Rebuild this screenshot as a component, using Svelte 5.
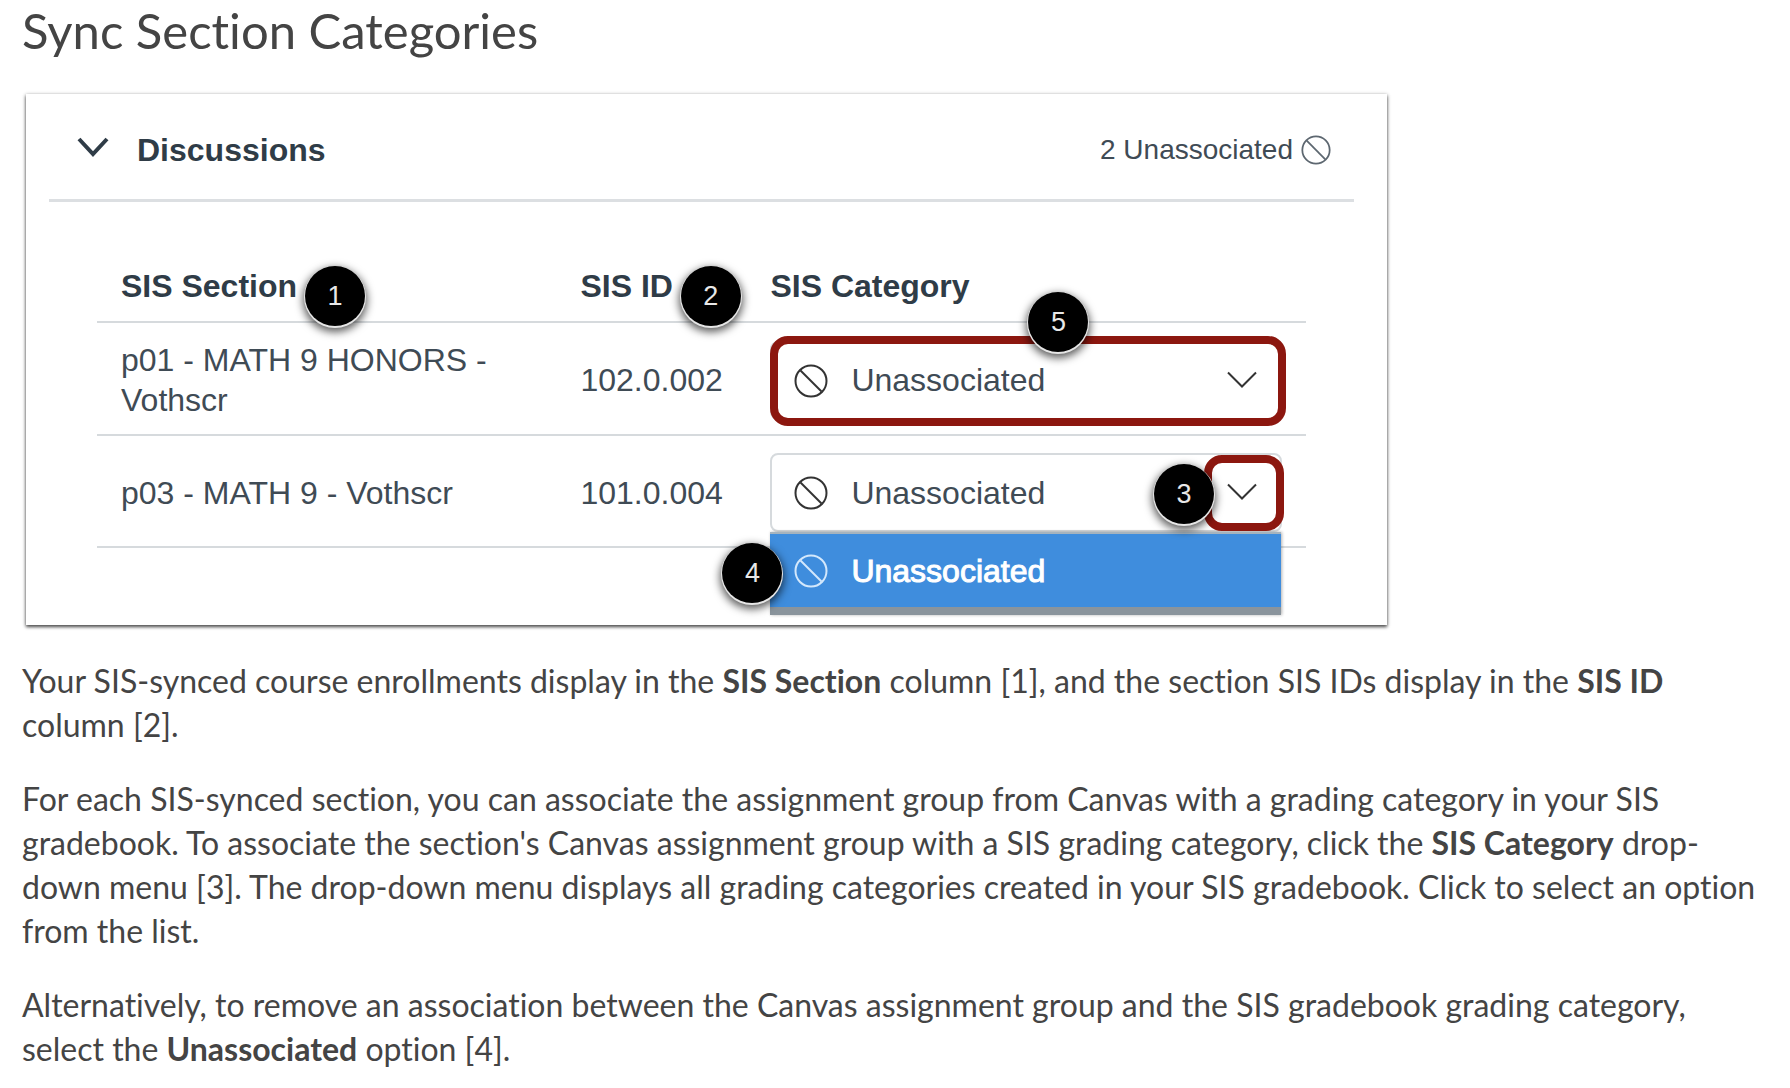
<script lang="ts">
	type Section = {
		id: string;
		name: string;
		sisId: string;
		category: string;
		open: boolean;
	};

	let sections = $state<Section[]>([
		{
			id: 'p01',
			name: 'p01 - MATH 9 HONORS - Vothscr',
			sisId: '102.0.002',
			category: 'Unassociated',
			open: false
		},
		{
			id: 'p03',
			name: 'p03 - MATH 9 - Vothscr',
			sisId: '101.0.004',
			category: 'Unassociated',
			open: true
		}
	]);

	const categories = ['Unassociated'];

	let expanded = $state(true);

	function pick(section: Section, category: string) {
		section.category = category;
		section.open = false;
	}
</script>

{#snippet noneIcon(className: string)}
	<svg class={className} viewBox="0 0 34 34" aria-hidden="true">
		<circle cx="17" cy="17" r="15.5" />
		<path d="M6.5 6.5 L27.5 27.5" />
	</svg>
{/snippet}

<main>
	<h1>Sync Section Categories</h1>

	<figure class="card">
		<div class="card-header">
			<button class="toggle" type="button" aria-expanded={expanded} onclick={() => (expanded = !expanded)}>
				<svg class="toggle-icon" viewBox="0 0 32 20" aria-hidden="true">
					<path d="M2 2 L16 17 L30 2" />
				</svg>
				<span>Discussions</span>
			</button>
			<span class="summary">
				2 Unassociated
				{@render noneIcon('none-icon small')}
			</span>
		</div>

		{#if expanded}
			<table>
				<colgroup>
					<col class="col-section" />
					<col class="col-id" />
					<col />
				</colgroup>
				<thead>
					<tr>
						<th scope="col"><span class="marked">SIS Section<span class="badge after">1</span></span></th>
						<th scope="col"><span class="marked">SIS ID<span class="badge after">2</span></span></th>
						<th scope="col">SIS Category</th>
					</tr>
				</thead>
				<tbody>
					{#each sections as section, i (section.id)}
						<tr>
							<td>{section.name}</td>
							<td>{section.sisId}</td>
							<td>
								<div class="picker">
									{@render noneIcon('none-icon lead')}
									<select bind:value={section.category} aria-label="SIS Category for {section.name}">
										{#each categories as category}
											<option>{category}</option>
										{/each}
									</select>
									<svg class="chevron" viewBox="0 0 30 18" aria-hidden="true">
										<path d="M1 1.5 L15 15.5 L29 1.5" />
									</svg>

									{#if section.open}
										<div class="menu">
											{#each categories as category}
												<button type="button" onclick={() => pick(section, category)}>
													{@render noneIcon('none-icon')}
													{category}
												</button>
											{/each}
										</div>
									{/if}

									{#if i === 0}
										<span class="outline whole"></span>
										<span class="badge five">5</span>
									{:else}
										<span class="outline arrow"></span>
										<span class="badge three">3</span>
										<span class="badge four">4</span>
									{/if}
								</div>
							</td>
						</tr>
					{/each}
				</tbody>
			</table>
		{/if}
	</figure>

	<p>
		Your SIS-synced course enrollments display in the <strong>SIS Section</strong> column [1], and the
		section SIS IDs display in the <strong>SIS ID</strong> column [2].
	</p>
	<p>
		For each SIS-synced section, you can associate the assignment group from Canvas with a grading
		category in your SIS gradebook. To associate the section's Canvas assignment group with a SIS
		grading category, click the <strong>SIS Category</strong> drop-down menu [3]. The drop-down menu
		displays all grading categories created in your SIS gradebook. Click to select an option from the
		list.
	</p>
	<p>
		Alternatively, to remove an association between the Canvas assignment group and the SIS gradebook
		grading category, select the <strong>Unassociated</strong> option [4].
	</p>
</main>

<style>
	:global(body) {
		background: #fff;
	}

	main {
		padding: 2px 20px 0 22px;
		font-family: Lato, sans-serif;
		font-size: 32px;
		font-variant-ligatures: none;
		line-height: 44px;
		color: #444;
	}

	h1 {
		margin: 0 0 36px;
		font-size: 49px;
		font-weight: 400;
		line-height: 56px;
	}

	p {
		margin: 0 0 30px;
	}

	.card {
		max-width: 1361px;
		box-sizing: border-box;
		margin: 0 0 34px 4px;
		padding: 0 33px 77px 23px;
		box-shadow:
			0 2px 3px rgba(0, 0, 0, 0.55),
			0 1px 4px rgba(0, 0, 0, 0.4);
		font-family: "Liberation Sans", Arial, sans-serif;
		font-size: 32px;
		line-height: 40px;
		color: #3f4b55;
	}

	.card-header {
		display: flex;
		align-items: center;
		justify-content: space-between;
		height: 105px;
		padding: 0 23px 0 28px;
		border-bottom: 3px solid #dcdfe2;
	}

	.toggle {
		display: flex;
		align-items: center;
		gap: 28px;
		padding: 6px 0 0;
		border: 0;
		background: none;
		font: inherit;
		font-weight: 700;
		color: #2f3c47;
		cursor: pointer;
	}

	.toggle-icon {
		width: 32px;
		height: 20px;
		margin-bottom: 6px;
		fill: none;
		stroke: #2f3c47;
		stroke-width: 4;
	}

	.summary {
		display: flex;
		align-items: center;
		gap: 8px;
		padding-top: 6px;
		font-size: 28px;
	}

	.none-icon {
		width: 34px;
		height: 34px;
		fill: none;
		stroke: #333;
		stroke-width: 2;
	}

	.none-icon.small {
		width: 30px;
		height: 30px;
		stroke: #5d6770;
	}

	table {
		width: calc(100% - 96px);
		margin: 64px 48px 0;
		table-layout: fixed;
		border-collapse: separate;
		border-spacing: 0;
	}

	.col-section {
		width: 38%;
	}

	.col-id {
		width: 190px;
	}

	th,
	td {
		border-bottom: 2px solid #d6dadd;
		text-align: left;
		vertical-align: middle;
	}

	th {
		padding: 0 24px 15px;
		font-weight: 700;
		white-space: nowrap;
		color: #2f3c47;
	}

	td {
		padding: 17px 24px 14px;
	}

	td:nth-child(2) {
		padding-right: 0;
	}

	.marked,
	.picker {
		position: relative;
	}

	select {
		display: block;
		width: 100%;
		height: 79px;
		padding: 0 79px;
		appearance: none;
		border: 2px solid #d6dadd;
		border-radius: 8px;
		background: #fff;
		font: inherit;
		color: inherit;
	}

	.lead,
	.chevron {
		position: absolute;
		pointer-events: none;
	}

	.lead {
		top: 23px;
		left: 24px;
	}

	.chevron {
		top: 30px;
		right: 25px;
		width: 30px;
		height: 18px;
		fill: none;
		stroke: #333;
		stroke-width: 2;
	}

	.menu {
		position: absolute;
		top: 100%;
		left: 0;
		right: 1px;
		border-top: 2px solid #a5b3be;
		border-bottom: 8px solid #8a949c;
		background: #3f8ddd;
		box-shadow: 1px 0 3px rgba(0, 0, 0, 0.3);
	}

	.menu button {
		display: flex;
		align-items: center;
		gap: 23px;
		width: 100%;
		height: 73px;
		padding: 0 24px;
		border: 0;
		background: none;
		font: inherit;
		color: #fff;
		-webkit-text-stroke: 1px #fff;
	}

	.menu .none-icon {
		stroke: #d3e8fc;
	}

	.outline {
		position: absolute;
		border: 8px solid #8c170f;
		border-radius: 18px;
		pointer-events: none;
	}

	.outline.whole {
		inset: -5px -4px -6px 0;
	}

	.outline.arrow {
		top: 2px;
		right: -2px;
		bottom: 1px;
		width: 64px;
	}

	.badge {
		position: absolute;
		display: grid;
		place-items: center;
		width: 60px;
		height: 60px;
		border-radius: 50%;
		background: #000;
		box-shadow:
			0 1px 0 1px #e6e6e6,
			0 4px 8px 2px rgba(0, 0, 0, 0.65);
		font-size: 27px;
		font-weight: 400;
		line-height: 32px;
		color: #e8e8e8;
	}

	.badge.after {
		top: -2px;
		left: calc(100% + 8px);
	}

	.badge.five {
		top: -49px;
		left: 258px;
	}

	.badge.three {
		top: 11px;
		right: 68px;
	}

	.badge.four {
		top: 90px;
		left: -48px;
	}
</style>
